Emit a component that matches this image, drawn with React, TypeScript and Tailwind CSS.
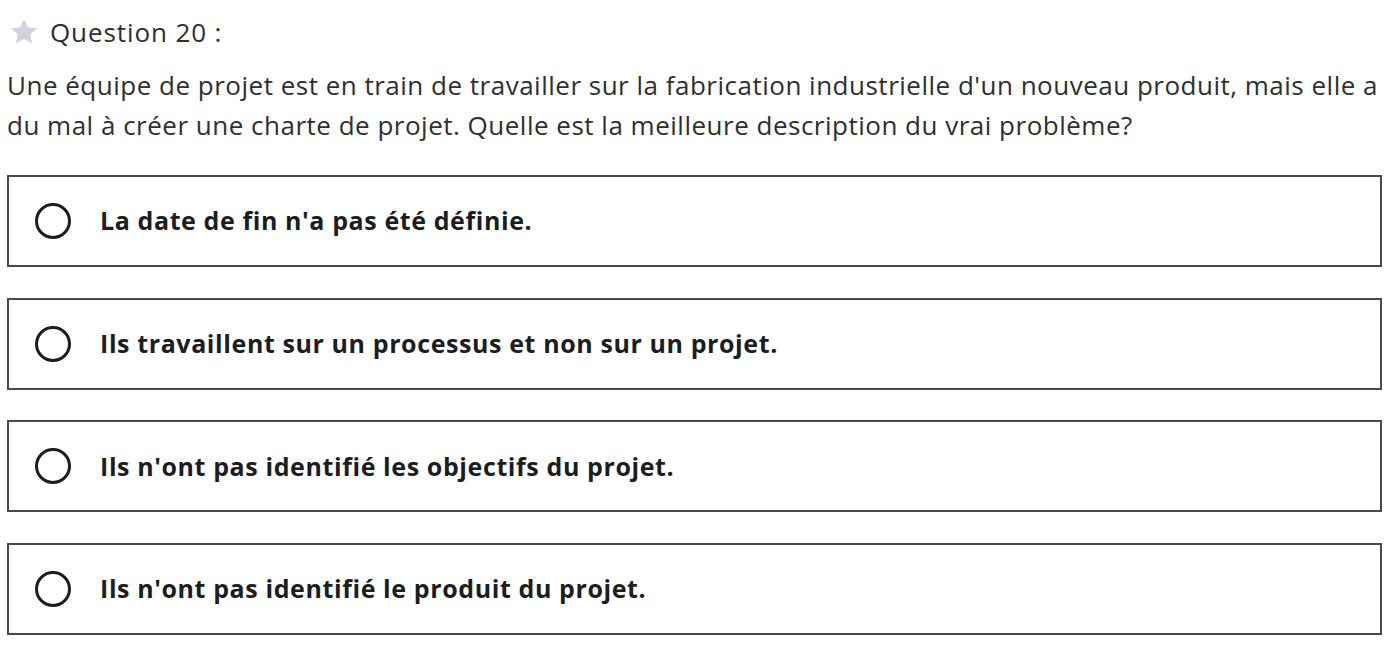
import React from "react";

const answers = [
  "La date de fin n'a pas été définie.",
  "Ils travaillent sur un processus et non sur un projet.",
  "Ils n'ont pas identifié les objectifs du projet.",
  "Ils n'ont pas identifié le produit du projet.",
];

export default function App() {
  return (
    <div className="w-[1390px] h-[650px] bg-white overflow-hidden pl-[7px] pr-[8px]" style={{ fontFamily: "'Open Sans', 'Noto Sans', sans-serif" }}>
      <div className="flex items-center h-[32px] mt-[16px] ml-[1px]">
        <svg width="32" height="32" viewBox="0 0 24 24" className="shrink-0">
          <path
            d="M12 2.2l2.95 6.3 6.85.75-5.1 4.65 1.4 6.8L12 17.25 5.9 20.7l1.4-6.8L2.2 9.25l6.85-.75z"
            fill="#d1d3da"
          />
        </svg>
        <span className="ml-[10px] text-[26px] text-[#2d2f31] leading-none tracking-[0.9px]">Question 20 :</span>
      </div>
      <p className="mt-[17px] text-[26px] leading-[40px] text-[#2d2f31] tracking-[0.5px] whitespace-nowrap">
        Une équipe de projet est en train de travailler sur la fabrication industrielle d'un nouveau produit, mais elle a
        <br />
        du mal à créer une charte de projet. Quelle est la meilleure description du vrai problème?
      </p>
      <div className="mt-[30px] flex flex-col gap-[30.7px]">
        {answers.map((a) => (
          <div key={a} className="h-[92px] border-2 border-[#4a4a4a] flex items-center pl-[26px]">
            <div className="w-[36px] h-[36px] rounded-full border-[3px] border-[#1c1d1f] shrink-0" />
            <span
              className="ml-[29px] text-[25px] font-bold text-[#1c1d1f] tracking-[0.6px]"
              style={{ fontVariantLigatures: "none" }}
            >
              {a}
            </span>
          </div>
        ))}
      </div>
    </div>
  );
}
